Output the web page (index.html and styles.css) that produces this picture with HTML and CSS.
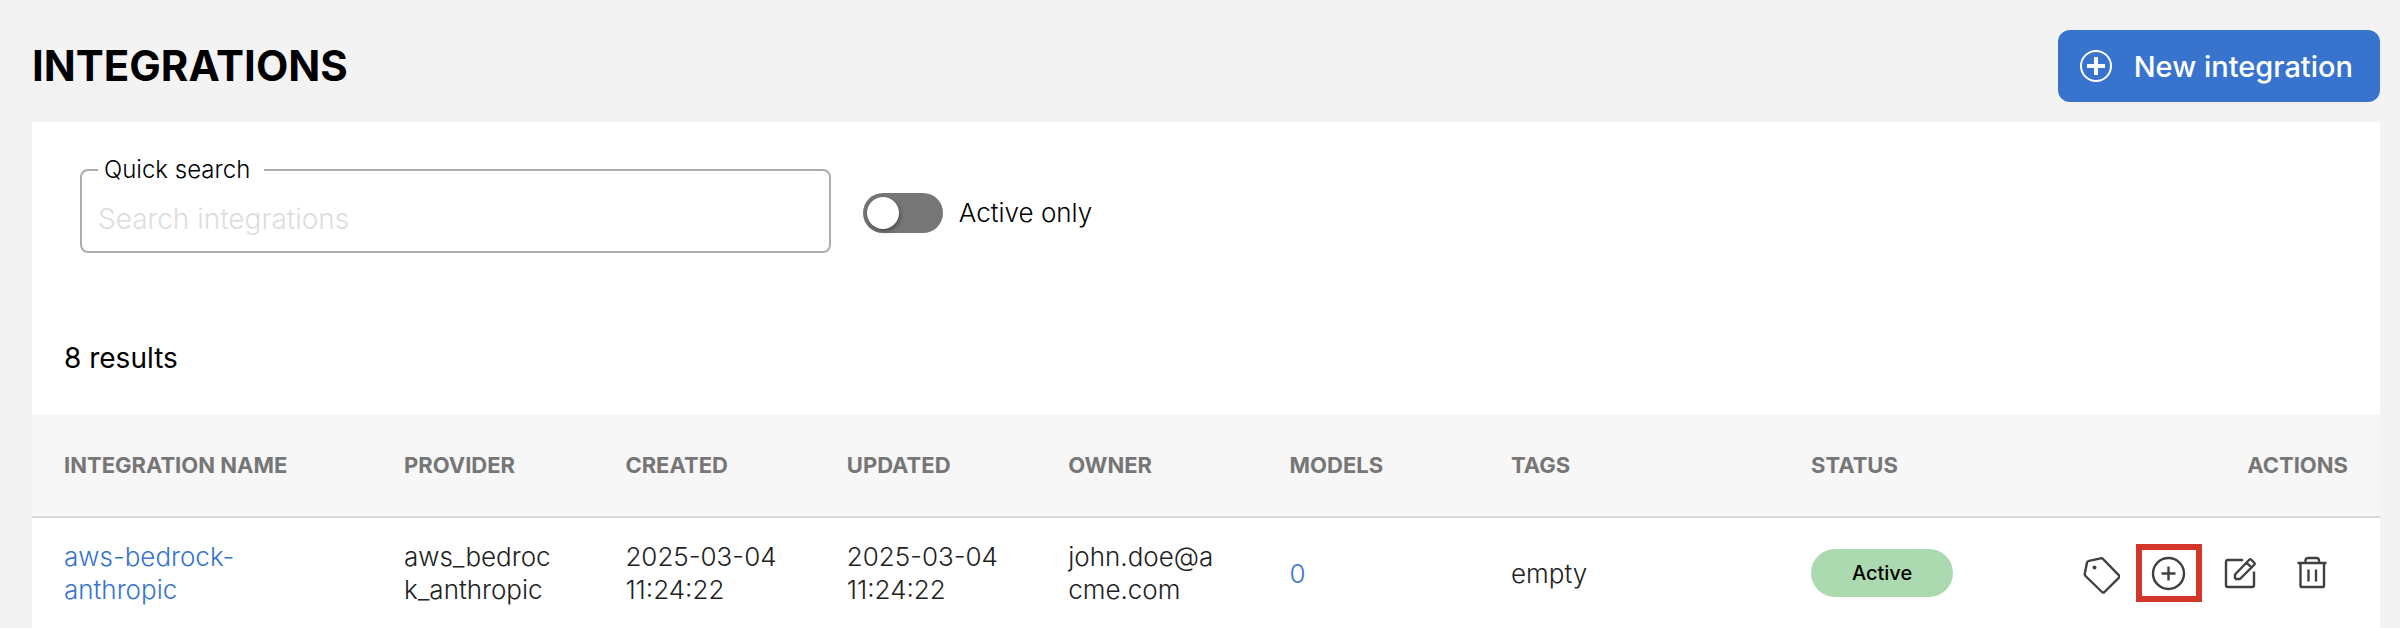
FILE: index.html
```html
<!DOCTYPE html>
<html lang="en">
<head>
<meta charset="utf-8">
<title>Integrations</title>
<link rel="stylesheet" href="styles.css">
</head>
<body>
<main class="page">
  <header class="page-header">
    <h1 class="page-title">INTEGRATIONS</h1>
    <button class="primary-button" type="button">
      <svg class="primary-icon" viewBox="0 0 32 32" aria-hidden="true"><circle cx="16" cy="16" r="15" stroke-width="2"/><path d="M16 7v18M7 16h18" stroke-width="4"/></svg>
      New integration
    </button>
  </header>
  <section class="card">
    <form class="filters">
      <fieldset class="search">
        <legend class="search-legend"><label for="search">Quick search</label></legend>
        <input class="search-input" id="search" type="text" placeholder="Search integrations">
      </fieldset>
      <label class="toggle"><input class="toggle-input" type="checkbox" role="switch">Active only</label>
    </form>
    <p class="results">8 results</p>
    <table class="table">
      <colgroup>
        <col class="col-name"><col class="col-std"><col class="col-std"><col class="col-std"><col class="col-std"><col class="col-std"><col class="col-tags"><col>
      </colgroup>
      <thead>
        <tr><th>INTEGRATION NAME</th><th>PROVIDER</th><th>CREATED</th><th>UPDATED</th><th>OWNER</th><th>MODELS</th><th>TAGS</th><th><div class="split"><span>STATUS</span><span>ACTIONS</span></div></th></tr>
      </thead>
      <tbody>
        <tr>
          <td><a class="link" href="#integration">aws-bedrock-<wbr>anthropic</a></td>
          <td>aws_bedroc<wbr>k_anthropic</td>
          <td>2025-03-04 11:24:22</td>
          <td>2025-03-04 11:24:22</td>
          <td>john.doe@a<wbr>cme.com</td>
          <td><a class="link" href="#models">0</a></td>
          <td>empty</td>
          <td>
            <div class="split">
              <span class="badge">Active</span>
              <div class="actions">
                <button class="action" type="button" aria-label="Edit tags"><svg class="action-icon" viewBox="0 0 48 48"><path d="M17 11.800L28.500 9.300Q30 9 31 10L47 26.300Q48 27.500 47 28.700L32.500 43Q31.200 44.200 30 43L13.500 27Q12.600 26 12.800 24.500L15 13.500Q15.300 12.200 17 11.800Z"/><circle class="dot" cx="22.500" cy="18.500" r="2"/></svg></button>
                <button class="action action-marked" type="button" aria-label="Add model"><svg class="action-icon" viewBox="0 0 48 48"><circle cx="23.500" cy="24.500" r="15.500"/><path d="M23.500 17.500v14M16.500 24.500h14"/></svg></button>
                <button class="action" type="button" aria-label="Edit"><svg class="action-icon" viewBox="0 0 48 48"><path d="M27 11H12Q10 11 10 13V36Q10 38 12 38H36Q38 38 38 36V22.500M19 30V25.500L33.500 10.500Q34.200 9.800 35 10.500L38.500 14Q39.200 14.800 38.500 15.500L24 30H19M30.500 13.500L35.500 18.500"/></svg></button>
                <button class="action" type="button" aria-label="Delete"><svg class="action-icon" viewBox="0 0 48 48"><path d="M9.500 14H38.500M12.500 14V37Q12.500 38 13.500 38H35Q36 38 36 37V14M17.500 13.500V11Q18 9 20 9H28.500Q30.500 9 31 11V13.500M20.500 20.500V32.500M28 20.500V32.500"/></svg></button>
              </div>
            </div>
          </td>
        </tr>
      </tbody>
    </table>
  </section>
</main>
</body>
</html>
```
FILE: styles.css
```css
* { box-sizing: border-box; }
body {
  margin: 0;
  background: #f3f3f3;
  color: #000;
  font-family: Inter, "Open Sans", sans-serif;
  font-size: 26px;
  font-weight: 300;
}
button, input { font: inherit; }
.page { padding: 30px 20px 0 32px; }
.page-header {
  display: flex;
  align-items: center;
  justify-content: space-between;
  margin-bottom: 20px;
}
.page-title {
  margin: 0;
  font-size: 42px;
  line-height: 48px;
  font-weight: 700;
}
.primary-button {
  display: flex;
  align-items: center;
  gap: 22px;
  height: 72px;
  padding: 0 27px 0 22px;
  border: 0;
  border-radius: 12px;
  background: #3874cd;
  color: #fff;
  font-size: 29px;
  font-weight: 500;
}
.primary-icon { width: 32px; height: 32px; fill: none; stroke: currentColor; }
.card { background: #fff; padding-top: 32px; }
.filters {
  display: flex;
  align-items: center;
  gap: 32px;
  padding: 0 48px;
}
.search {
  flex: 0 0 33.34%;
  min-width: 0;
  margin: 0;
  padding: 0 16px;
  border: 2px solid #adadad;
  border-radius: 8px;
}
.search-legend {
  padding: 0 14px 0 6px;
  font-size: 24px;
  line-height: 32px;
}
.search-input {
  display: block;
  width: 100%;
  height: 65px;
  padding: 0;
  border: 0;
  outline: 0;
  background: transparent;
  font-size: 28px;
}
.search-input::placeholder { color: #ddd; opacity: 1; }
.toggle {
  display: flex;
  align-items: center;
  gap: 16px;
  margin-top: 18px;
}
.toggle-input {
  appearance: none;
  width: 80px;
  height: 40px;
  margin: 0;
  padding: 4px;
  border-radius: 20px;
  background: #767676;
}
.toggle-input::before {
  content: "";
  display: block;
  width: 32px;
  height: 32px;
  border-radius: 50%;
  background: #fff;
  box-shadow: 1px 2px 4px rgba(0, 0, 0, 0.4);
}
.results {
  margin: 0;
  padding: 85px 32px 36px;
  font-size: 28px;
  line-height: 40px;
  font-weight: 400;
}
.table { width: 100%; border-collapse: separate; border-spacing: 0; table-layout: fixed; }
.col-name { width: 14.48%; }
.col-std { width: 9.43%; }
.col-tags { width: 12.78%; }
.table th {
  height: 104px;
  padding: 0 0 0 32px;
  border-bottom: 2px solid #d9d9d9;
  background: #f7f7f7;
  color: #767676;
  font-size: 22px;
  font-weight: 700;
  text-align: left;
}
.table td {
  height: 110px;
  padding: 0 30px 0 32px;
  color: #212121;
  line-height: 33px;
}
.table th:last-child, .table td:last-child { padding-right: 32px; }
.link { color: #3874cd; text-decoration: none; }
.split {
  display: flex;
  align-items: center;
  justify-content: space-between;
}
.badge {
  width: 142px;
  border-radius: 24px;
  background: #acdab0;
  color: #000;
  font-size: 20px;
  line-height: 48px;
  font-weight: 500;
  text-align: center;
}
.actions { display: flex; }
.action {
  display: flex;
  align-items: center;
  justify-content: center;
  width: 72px;
  height: 58px;
  padding: 0;
  border: 0;
  background: transparent;
  color: #404040;
}
.action-marked {
  width: 66px;
  margin: 0 2px 0 4px;
  border: 6px solid #d3372a;
}
.action-icon {
  flex: none;
  width: 48px;
  height: 48px;
  fill: none;
  stroke: currentColor;
  stroke-width: 2.4;
  stroke-linejoin: round;
}
.dot { fill: currentColor; stroke: none; }
```
